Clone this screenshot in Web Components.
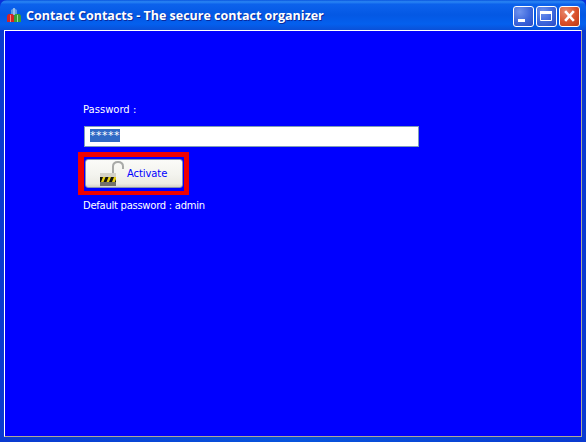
<!DOCTYPE html>
<html>
<head>
<meta charset="utf-8">
<title>Contact Contacts</title>
<style>
  html, body { margin: 0; padding: 0; background: #0831d9; }
</style>
</head>
<body>
<xp-window title="Contact Contacts - The secure contact organizer">
  <login-form hint="Default password : admin"></login-form>
</xp-window>

<script>
class XpCaptionButton extends HTMLElement {
  constructor() {
    super();
    this.attachShadow({ mode: 'open' });
  }

  connectedCallback() {
    const kind = this.getAttribute('kind');
    const glyphs = {
      min: '<rect x="4" y="12" width="7" height="3" fill="#fff"/>',
      max: '<path d="M3.500 4.500h11v9h-11z" fill="none" stroke="#fff"/><rect x="3" y="4" width="12" height="3" fill="#fff"/>',
      close: '<path d="M6 5l7 8M13 5l-7 8" stroke="#fff" stroke-width="2.600" stroke-linecap="square" fill="none"/>'
    };
    this.shadowRoot.innerHTML = `
      <style>
        :host {
          display: block;
          width: 21px;
          height: 21px;
          box-sizing: border-box;
          border: 1px solid #fff;
          border-radius: 3px;
          background: radial-gradient(circle at 30% 25%, #6f93ee 0%, #3c66dc 55%, #2a4bc4 100%);
        }
        :host([kind="close"]) {
          background: radial-gradient(circle at 30% 25%, #e98a6d 0%, #d9502a 55%, #bd3a15 100%);
        }
        svg { display: block; }
      </style>
      <svg width="19" height="19" viewBox="0 0 19 19">${glyphs[kind]}</svg>
    `;
  }
}
customElements.define('xp-caption-button', XpCaptionButton);

class XpWindow extends HTMLElement {
  constructor() {
    super();
    this.attachShadow({ mode: 'open' });
  }

  connectedCallback() {
    const title = this.getAttribute('title') || '';
    this.shadowRoot.innerHTML = `
      <style>
        :host {
          display: flex;
          flex-direction: column;
          width: 586px;
          height: 442px;
          box-sizing: border-box;
          background: #0831d9;
          overflow: hidden;
        }
        .bar {
          flex: none;
          height: 30px;
          display: flex;
          align-items: center;
          padding: 0 6px 0 7px;
          border-radius: 7px 7px 0 0;
          background: linear-gradient(#0a55de 0%, #2a86f4 6%, #0c62ec 14%, #0458e4 50%, #0460ee 80%, #0a50d8 100%);
        }
        .title {
          flex: 1;
          margin-left: 5px;
          color: #fff;
          font: bold 12.500px "Open Sans", sans-serif;
          white-space: nowrap;
          text-shadow: 1px 1px 0 #0a2a9c;
        }
        .buttons { display: flex; gap: 2px; padding-top: 3px; }
        .frame {
          flex: 1;
          display: flex;
          padding: 0 4px 5px 4px;
          background: linear-gradient(90deg, #0a3ad0, #0855dd 50%, #0a3ad0);
          min-height: 0;
        }
        .client {
          flex: 1;
          background: #0000ff;
          border-style: solid;
          border-width: 1px;
          border-color: #fff #aca899 #aca899 #fff;
        }
      </style>
      <div class="bar">
        <svg width="14" height="14" viewBox="0 0 14 14">
          <path d="M4 2l3-2 3 2v5H4z" fill="#5e9be4"/>
          <path d="M7 0v7" stroke="#cfe2f8"/>
          <path d="M0 7.500l1.500-1.500h4L7 7.500V14H0z" fill="#d42424"/>
          <path d="M7 7.500L8.500 6h4L14 7.500V14H7z" fill="#36a036"/>
          <path d="M3.500 7v7" stroke="#f08a8a"/>
          <path d="M10.500 7v7" stroke="#9ade9a"/>
        </svg>
        <span class="title">${title}</span>
        <div class="buttons">
          <xp-caption-button kind="min"></xp-caption-button>
          <xp-caption-button kind="max"></xp-caption-button>
          <xp-caption-button kind="close"></xp-caption-button>
        </div>
      </div>
      <div class="frame">
        <div class="client"><slot></slot></div>
      </div>
    `;
  }
}
customElements.define('xp-window', XpWindow);

class LockButton extends HTMLElement {
  constructor() {
    super();
    this.attachShadow({ mode: 'open' });
  }

  connectedCallback() {
    this.shadowRoot.innerHTML = `
      <style>
        :host {
          display: flex;
          align-items: center;
          width: 98px;
          height: 29px;
          box-sizing: border-box;
          padding: 0 0 0 14px;
          border: 1px solid #8492b8;
          border-radius: 3px;
          background: linear-gradient(#fbfbf8 0%, #f3f3ee 55%, #ecebe3 88%, #d6d3c8 100%);
          color: #0000ff;
          font: 10px "DejaVu Sans", sans-serif;
          letter-spacing: -.1px;
        }
        svg { display: block; flex: none; margin-right: 3px; }
      </style>
      <svg width="24" height="25" viewBox="0 0 24 25">
        <path d="M13 13V5.500C13 2.500 15 1 18 1s5 1.500 5 4.500V8" fill="none" stroke="#a9aaa8" stroke-width="2"/>
        <rect x="0" y="12" width="16" height="13" rx="1" fill="#a5a396"/>
        <rect x="0" y="12" width="16" height="4" fill="#d4d2c8"/>
        <rect x="0" y="16" width="16" height="5" fill="#12120c"/>
        <path d="M1 21l2-5h2.500l-2 5zM6.500 21l2-5H11l-2 5zM12 21l2-5h2v2l-1.200 3z" fill="#e6cf14"/>
        <rect x="0" y="21" width="16" height="4" fill="#73716a"/>
      </svg>
      <slot></slot>
    `;
  }
}
customElements.define('lock-button', LockButton);

class LoginForm extends HTMLElement {
  constructor() {
    super();
    this.attachShadow({ mode: 'open' });
  }

  connectedCallback() {
    const hint = this.getAttribute('hint') || '';
    this.shadowRoot.innerHTML = `
      <style>
        :host {
          display: flex;
          flex-direction: column;
          align-items: flex-start;
          padding: 73px 0 0 78px;
          color: #fff;
          font: 10px "DejaVu Sans", sans-serif;
          letter-spacing: -.27px;
        }
        .label { height: 12px; line-height: 12px; letter-spacing: 0; }
        .field {
          width: 335px;
          height: 21px;
          box-sizing: border-box;
          margin: 10px 0 0 1px;
          padding: 2px 0 0 5px;
          border: 1px solid #7f9db9;
          background: #fff;
        }
        .sel {
          display: inline-block;
          height: 13px;
          line-height: 15px;
          background: #316ac5;
          color: #fff;
          font: 11px "DejaVu Sans", sans-serif;
          letter-spacing: .5px;
          vertical-align: top;
        }
        .mark {
          margin: 5px 0 0 -5px;
          padding: 2px 1px 3px;
          border-style: solid;
          border-color: #f00000;
          border-width: 5px 5px 4px 6px;
        }
        .hint { margin-top: 5px; height: 12px; line-height: 12px; }
      </style>
      <div class="label">Password :</div>
      <div class="field"><span class="sel">*****</span></div>
      <div class="mark"><lock-button>Activate</lock-button></div>
      <div class="hint">${hint}</div>
    `;
  }
}
customElements.define('login-form', LoginForm);
</script>
</body>
</html>
